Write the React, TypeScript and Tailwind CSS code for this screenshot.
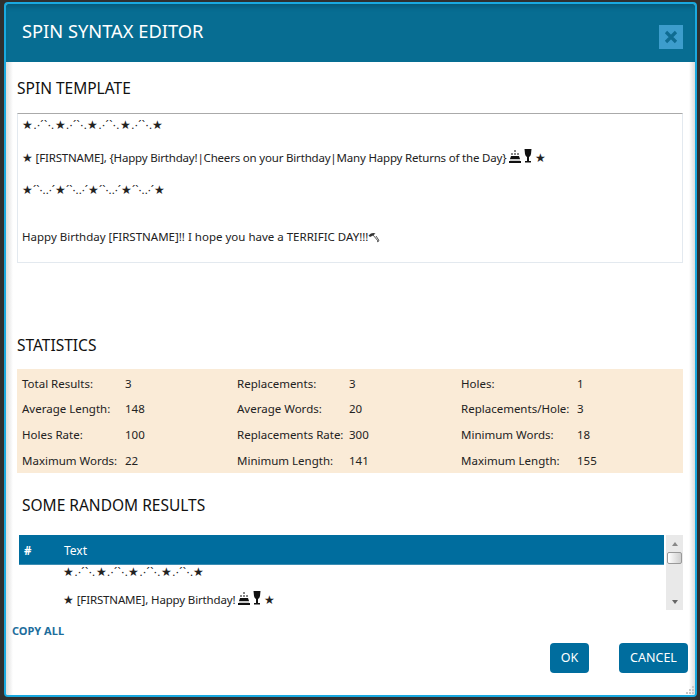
import React from 'react';

const topBorder = '★.·´`·.★.·´`·.★.·´`·.★.·´`·.★';
const bottomBorder = '★´`·..·´★´`·..·´★´`·..·´★´`·..·´★';

const stats = [
	['Total Results:', '3', 'Replacements:', '3', 'Holes:', '1'],
	['Average Length:', '148', 'Average Words:', '20', 'Replacements/Hole:', '3'],
	['Holes Rate:', '100', 'Replacements Rate:', '300', 'Minimum Words:', '18'],
	['Maximum Words:', '22', 'Minimum Length:', '141', 'Maximum Length:', '155'],
];

const Cake = () => (
	<svg width="12" height="13" viewBox="0 0 12 13" className="inline-block align-[-1px]">
		<path d="M6 0v2M3 3v2M9 3v2M6 3v2" stroke="#111" strokeWidth="1" fill="none" />
		<path d="M2 6h8l1 3H1z" fill="#111" />
		<path d="M1 9.500h10v1H1z" fill="#999" />
		<path d="M0 11h12v2H0z" fill="#111" />
	</svg>
);

const Glass = () => (
	<svg width="8" height="14" viewBox="0 0 8 14" className="inline-block align-[-1px]">
		<path d="M0.500 0h7l-0.500 5q-0.500 2.500-2 3v4h2v1.500H1V12h2V8Q1.500 7.500 1 5z" fill="#111" />
	</svg>
);

const Pick = () => (
	<svg width="12" height="11" viewBox="0 0 12 11" className="inline-block align-[-2px]">
		<path d="M0.500 3.500Q4 0 7.500 1.500L5 3.500 2 5z" fill="#333" />
		<path d="M5 3l5.500 6.500M8 4l3 4.500-2 1.500" stroke="#555" strokeWidth="1" fill="none" />
	</svg>
);

const Resize = () => (
	<svg width="10" height="10" viewBox="0 0 10 10" className="absolute bottom-0 right-0">
		<path d="M7 1h2v2H7zM4 4h2v2H4zM7 4h2v2H7zM1 7h2v2H1zM4 7h2v2H4zM7 7h2v2H7z" fill="#c8c8c8" />
	</svg>
);

function SectionTitle({ children, className }: { children: React.ReactNode; className?: string }) {
	return <h2 className={`text-[15.500px] leading-[22px] text-[#111] ${className ?? ''}`}>{children}</h2>;
}

export default function App() {
	return (
		<div className="w-[700px] h-[700px] bg-[#2f2f2f] pt-[2px] pl-[4px] pr-[3px] pb-[3px] font-['Noto_Sans','Open_Sans',sans-serif] text-[11.500px] text-[#222]">
			<div className="relative flex flex-col w-full h-full border-2 border-[#19a9e0] rounded-[4px] bg-white overflow-hidden">
				{/* Header */}
				<div className="flex items-start justify-between h-[58px] shrink-0 bg-[#076d92] shadow-[inset_0_5px_5px_-2px_rgba(0,0,0,0.18)] pl-[16px] pr-[12px]">
					<h1 className="text-[18.300px] leading-[24px] mt-[15px] text-white">SPIN SYNTAX EDITOR</h1>
					<button className="mt-[21px] flex items-center justify-center w-[24px] h-[24px] bg-[#3d9dcc]">
						<svg width="14" height="14" viewBox="0 0 14 14">
							<path d="M2 2l10 10M12 2L2 12" stroke="#0f6c92" strokeWidth="3.200" />
						</svg>
					</button>
				</div>

				{/* Body */}
				<div className="relative flex-1 flex flex-col">
					<div className="absolute inset-y-0 left-0 w-[7px] bg-gradient-to-r from-[#dcdcdc] to-white" />
					<div className="absolute inset-y-0 right-0 w-[6px] bg-gradient-to-l from-[#dcdcdc] to-white" />

					<div className="relative pl-[11px] pr-[12px] pt-[15px]">
						<SectionTitle>SPIN TEMPLATE</SectionTitle>
						<div className="mt-[14px] h-[150px] border border-[#e3e9ef] border-t-[#aaaaaa] pl-[4px] pt-[3px] leading-[16px]">
							<p className="mb-[16px] tracking-[0.400px]">{topBorder}</p>
							<p className="mb-[16px] tracking-[-0.190px]">
								★ [FIRSTNAME], {'{'}Happy Birthday!|Cheers on your Birthday|Many Happy Returns of the Day{'}'} <Cake /> <Glass /> ★
							</p>
							<p className="mb-[31px]">{bottomBorder}</p>
							<p>
								Happy Birthday [FIRSTNAME]!! I hope you have a TERRIFIC DAY!!!
								<Pick />
							</p>
						</div>

						<SectionTitle className="mt-[71px]">STATISTICS</SectionTitle>
						<div className="mt-[13px] h-[104px] bg-[#faebd7] pl-[5px] pt-[1.500px] grid grid-cols-[103px_112px_112px_112px_116px_1fr] auto-rows-[25.670px] items-center">
							{stats.flat().map((cell, i) => (
								<span key={i} className="whitespace-nowrap">
									{cell}
								</span>
							))}
						</div>

						<SectionTitle className="mt-[21px] ml-[5px]">SOME RANDOM RESULTS</SectionTitle>

						{/* Results table */}
						<div className="mt-[19px] ml-[2px] flex gap-[2px] h-[75px]">
							<div className="w-[645px] overflow-hidden">
								<div className="flex items-center h-[30px] bg-[#006d9e] border-b border-[#3c8db3] text-white pl-[5px] pt-[2px]">
									<span className="w-[40px] font-bold">#</span>
									<span className="text-[12px]">Text</span>
								</div>
								<div className="pl-[44px] leading-[16px] -mt-[1px]">
									<p className="mb-[11px] tracking-[0.400px]">{topBorder}</p>
									<p className="tracking-[-0.150px]">
										★ [FIRSTNAME], Happy Birthday! <Cake /> <Glass /> ★
									</p>
								</div>
							</div>
							<div className="w-[17px] bg-[#e9e9e9] flex flex-col items-center pt-[7px]">
								<div className="w-0 h-0 border-x-[3px] border-x-transparent border-b-[4px] border-b-[#888]" />
								<div className="mt-[6px] w-[15px] h-[12px] border border-[#999] rounded-[2px] bg-gradient-to-r from-white to-[#cfcfcf]" />
								<div className="mt-auto mb-[6px] w-0 h-0 border-x-[3px] border-x-transparent border-t-[4px] border-t-[#666]" />
							</div>
						</div>
					</div>

					<a className="relative mt-[14px] ml-[6px] text-[11px] leading-[14px] font-bold text-[#1d6d9c]">COPY ALL</a>

					<div className="relative flex justify-end gap-[30px] mt-[5px] pr-[7px]">
						<button className="w-[39px] h-[30px] rounded-[4px] bg-[#006d9e] text-white text-[12.500px]">OK</button>
						<button className="w-[69px] h-[30px] rounded-[4px] bg-[#006d9e] text-white text-[12.500px]">CANCEL</button>
					</div>
					<Resize />
				</div>
			</div>
		</div>
	);
}
